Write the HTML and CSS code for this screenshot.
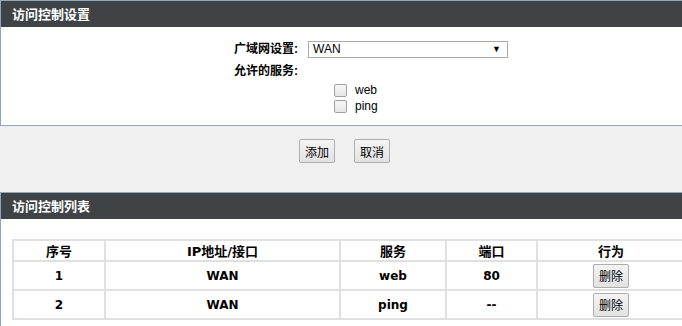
FILE: index.html
```html
<!DOCTYPE html>
<html lang="zh-CN">
<head>
<meta charset="utf-8">
<title>访问控制</title>
<link rel="stylesheet" href="styles.css">
</head>
<body>
<div class="page">
  <section class="panel panel-top">
    <div class="panel-head">访问控制设置</div>
    <div class="panel-body form-body">
      <div class="form-grid">
        <label class="form-label">广域网设置:</label>
        <div class="select"><span>WAN</span><span class="arrow">&#9660;</span></div>
        <label class="form-label">允许的服务:</label>
        <div></div>
        <div></div>
        <div class="checks">
          <div class="check-row"><span class="checkbox"></span><span>web</span></div>
          <div class="check-row"><span class="checkbox"></span><span>ping</span></div>
        </div>
      </div>
    </div>
  </section>
  <div class="button-bar">
    <button class="btn">添加</button>
    <button class="btn">取消</button>
  </div>
  <section class="panel panel-list">
    <div class="panel-head">访问控制列表</div>
    <div class="panel-body list-body">
      <table class="list">
        <colgroup>
          <col class="c1"><col class="c2"><col class="c3"><col class="c4"><col class="c5">
        </colgroup>
        <thead>
          <tr><th>序号</th><th>IP地址/接口</th><th>服务</th><th>端口</th><th>行为</th></tr>
        </thead>
        <tbody>
          <tr><td>1</td><td>WAN</td><td>web</td><td>80</td><td><button class="btn">删除</button></td></tr>
          <tr><td>2</td><td>WAN</td><td>ping</td><td>--</td><td><button class="btn">删除</button></td></tr>
        </tbody>
      </table>
    </div>
  </section>
</div>
</body>
</html>
```
FILE: styles.css
```css
html, body {
  margin: 0;
  padding: 0;
}
body {
  background: #f0f0f0;
  overflow: hidden;
  font-family: "Liberation Sans", "Noto Sans CJK SC", sans-serif;
  font-size: 12px;
  color: #000;
}
.page {
  width: 696px;
}
.panel {
  border: 1px solid #8fa6c0;
  background: #fff;
}
.panel-head {
  height: 26px;
  line-height: 27px;
  background: #3f4345;
  color: #fff;
  font-weight: bold;
  font-size: 13px;
  padding-left: 11px;
}
.form-body {
  height: 98px;
  box-sizing: border-box;
  padding-top: 14px;
}
.form-grid {
  display: grid;
  grid-template-columns: 297px 200px;
  grid-template-rows: 17px 17px auto;
  column-gap: 10px;
  row-gap: 5px;
}
.form-label {
  text-align: right;
  line-height: 17px;
  font-weight: bold;
}
.select {
  box-sizing: border-box;
  height: 17px;
  border: 1px solid #a9a9a9;
  display: flex;
  align-items: center;
  justify-content: space-between;
  padding: 0 6px 0 4px;
  line-height: 15px;
}
.arrow {
  font-size: 9px;
}
.checks {
  padding-left: 26px;
  margin-top: -3px;
}
.check-row {
  display: flex;
  align-items: center;
  height: 16px;
  gap: 8px;
}
.checkbox {
  width: 11px;
  height: 11px;
  border: 1px solid #a0a0a0;
  border-radius: 2px;
  background: linear-gradient(#f7f7f7, #e6e6e6);
}
.button-bar {
  width: 689px;
  height: 66px;
  box-sizing: border-box;
  padding-top: 13px;
  display: flex;
  justify-content: center;
  align-items: flex-start;
  gap: 19px;
}
.btn {
  height: 24px;
  width: 36px;
  padding: 0;
  font-family: "Liberation Sans", "Noto Sans CJK SC", sans-serif;
  font-size: 12px;
  color: #000;
  border: 1px solid #adadad;
  border-radius: 2px;
  background: linear-gradient(#f4f4f4, #e2e2e2);
}
.list-body {
  padding: 20px 11px 6px;
}
.list {
  border-collapse: collapse;
  width: 672px;
  table-layout: fixed;
}
.c1 { width: 92px; }
.c2 { width: 235px; }
.c3 { width: 106px; }
.c4 { width: 91px; }
.c5 { width: 148px; }
.list th, .list td {
  border: 2px solid #e0e0e0;
  text-align: center;
  padding: 0;
}
.list th {
  height: 19px;
  font-size: 13px;
  font-weight: bold;
  font-family: "DejaVu Sans", "Noto Sans CJK SC", sans-serif;
}
.list td {
  height: 27px;
  font-weight: bold;
  font-family: "DejaVu Sans", "Noto Sans CJK SC", sans-serif;
  font-size: 12px;
}
.list td .btn {
  font-weight: normal;
  vertical-align: middle;
}
```
